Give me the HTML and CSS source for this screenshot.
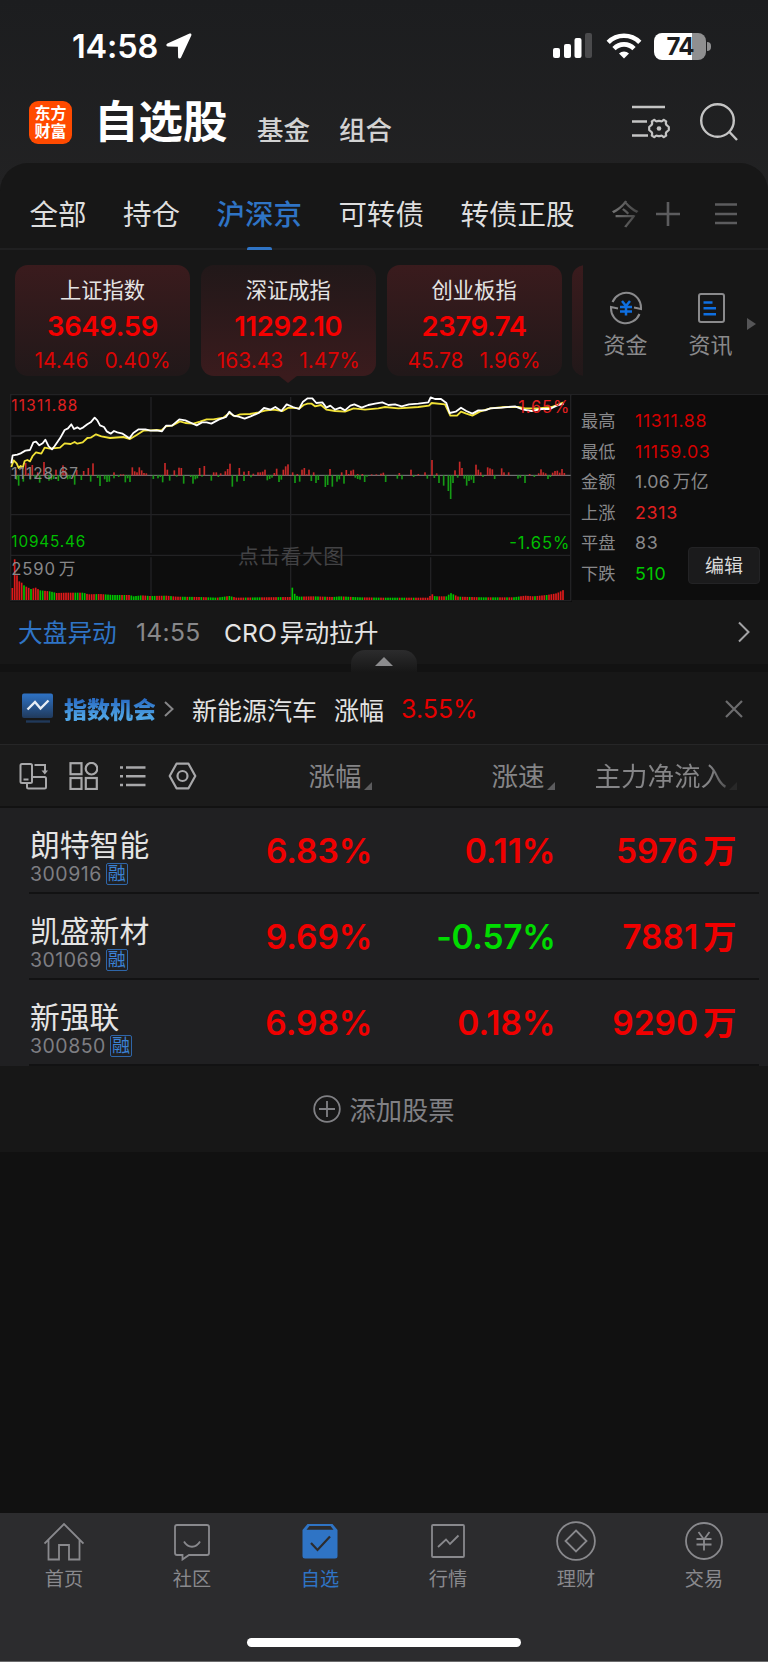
FILE: index.html
```html
<!DOCTYPE html>
<html lang="zh-CN">
<head>
  <meta charset="UTF-8" />
  <meta name="viewport" content="width=device-width, initial-scale=1" />
  <title>自选股</title>
  <link rel="stylesheet" href="styles.css">
</head>
<body>
  <div class="app">
    <div class="status-bar">
      <span class="time">14:58</span>
      <svg class="location" width="26" height="26" viewBox="0 0 26 26"><path d="M23.600.6 1.400 10.400c-1.600.8-1.300 2.900.5 3l10 .3.200 10.200c.1 1.800 2.400 2.200 3.100.4L25.300 2.400c.5-1.300-.4-2.300-1.700-1.800z" fill="#fff"/></svg>
      <svg class="signal" width="40" height="26" viewBox="0 0 40 26">
        <rect x="0" y="15" width="7" height="10" rx="2" fill="#fff"/>
        <rect x="11" y="11" width="7" height="14" rx="2" fill="#fff"/>
        <rect x="21.500" y="5" width="7" height="20" rx="2" fill="#fff"/>
        <rect x="32" y="0" width="7" height="25" rx="2" fill="#4a4a4c"/>
      </svg>
      <svg class="wifi" width="36" height="26" viewBox="0 0 36 26" fill="none" stroke="#fff" stroke-width="4.600">
        <path d="M2.200 9.300a22.300 22.300 0 0 1 31.600 0"/>
        <path d="M8 15.600a14 14 0 0 1 20 0"/>
        <path d="M18 25.500l-5-5a7.200 7.200 0 0 1 10 0z" fill="#fff" stroke="none"/>
      </svg>
      <div class="battery"><span>74</span></div>
    </div>

    <header class="header">
      <div class="logo"><span>东方</span><span>财富</span></div>
      <h1>自选股</h1>
      <a class="sub">基金</a>
      <a class="sub">组合</a>
      <svg class="manage" width="38" height="34" viewBox="0 0 38 34" fill="none" stroke="#c4c4c4" stroke-width="2.400">
        <path d="M0 2h33M0 16.500h15M0 30.500h16"/>
        <path stroke-width="2.200" stroke-linejoin="round" d="M22.500 14.800q1.500 2 3.200 1.300 1.300-.5 2.600 0 1.700.7 3.200-1.300l2.700 1.600q-1 2.600.7 3.900l1.900 1.700v3l-1.900 1.700q-1.700 1.300-.7 3.900l-2.700 1.600q-1.500-2-3.200-1.300-1.300.5-2.600 0-1.700-.7-3.200 1.300l-2.700-1.600q1-2.600-.7-3.900L17.200 25v-3l1.900-1.700q1.700-1.300.7-3.900z"/>
        <circle cx="27" cy="23.500" r="2.300" fill="#c4c4c4" stroke="none"/>
      </svg>
      <svg class="search" width="38" height="38" viewBox="0 0 38 38" fill="none" stroke="#c4c4c4" stroke-width="2.400">
        <circle cx="17.500" cy="17.500" r="16.300"/><path d="M29 28.500l8 8.500"/>
      </svg>
    </header>

    <main class="panel">
      <nav class="tabs">
        <a>全部</a><a>持仓</a><a class="active">沪深京</a><a>可转债</a><a>转债正股</a><a class="faded">今</a>
        <svg class="add" width="24" height="24" viewBox="0 0 24 24" stroke="#5c5c5e" stroke-width="2.600"><path d="M12 0v24M0 12h24"/></svg>
        <svg class="menu" width="22" height="22" viewBox="0 0 22 22" stroke="#5c5c5e" stroke-width="2.400"><path d="M0 1.500h22M0 11h22M0 20h22"/></svg>
      </nav>

      <section class="indices">
        <div class="cards">
          <div class="card">
            <div class="name">上证指数</div>
            <div class="price">3649.59</div>
            <div class="change"><span>14.46</span><span>0.40%</span></div>
          </div>
          <div class="card selected">
            <div class="name">深证成指</div>
            <div class="price">11292.10</div>
            <div class="change"><span>163.43</span><span>1.47%</span></div>
          </div>
          <div class="card">
            <div class="name">创业板指</div>
            <div class="price">2379.74</div>
            <div class="change"><span>45.78</span><span>1.96%</span></div>
          </div>
          <div class="card"></div>
        </div>
        <div class="shortcut">
          <svg width="34" height="34" viewBox="0 0 34 34" fill="none" stroke="#8a8a8c" stroke-width="2">
            <path d="M3.500 11A14.800 14.800 0 0 1 32 17v1l-7-1.500M30.500 23A14.800 14.800 0 0 1 2 17v-1l7 1.500"/>
            <path stroke="#0f6fe0" stroke-width="2.500" d="M13 10l4 5 4-5M11 16h12M11 20.500h12M17 15v9.500"/>
          </svg>
          <span>资金</span>
        </div>
        <div class="shortcut">
          <svg width="34" height="34" viewBox="0 0 34 34" fill="none" stroke="#8a8a8c" stroke-width="2">
            <rect x="5" y="3" width="25" height="28" rx="2"/>
            <path stroke="#0f6fe0" stroke-width="2.600" d="M9.500 11.500h9M9.500 17.300h12.500M9.500 23.200h12.500"/>
          </svg>
          <span>资讯</span>
        </div>
        <i class="more"></i>
      </section>

      <section class="market">
        <!-- viewBox is three units per pixel -->
        <svg class="chart" width="562" height="208" viewBox="30 27 1686 624">
          <g stroke="#222224" stroke-width="4" fill="none">
            <path d="M32 27V648M1712 27V648M30 29H1716M30 153H1712M30 389H1712M30 511H1712M30 647H1712"/>
            <path d="M453 36V505M453 517V645M872 36V505M872 517V645M1292 36V505M1292 517V645"/>
          </g>
          <text class="hint" x="714" y="536" textLength="318">点击看大图</text>
          <path d="M34 271H1712" stroke="#858587" stroke-width="3"/>
          <g id="momentum"></g>
          <g id="volume"></g>
          <g fill="none" stroke-width="5.500" stroke-linejoin="round">
            <polyline stroke="#f0e136" points="34,246 41,226 50,235 56,249 62,243 68,249 74,228 82,225 90,229 98,213 108,202 124,206 134,188 150,191 180,188 194,175 212,177 224,171 232,176 248,172 262,159 272,158 288,148 304,154 330,159 370,156 390,162 410,150 430,137 452,136 470,135 484,136 498,124 516,122 540,109 556,114 580,116 600,110 620,103 640,103 670,98 688,84 705,94 720,88 750,87 776,82 795,77 820,74 848,78 865,68 899,70 911,60 923,56 935,56 945,64 963,60 979,74 1005,78 1035,80 1061,70 1095,74 1135,70 1155,66 1195,70 1255,66 1287,62 1295,54 1335,58 1351,92 1371,92 1383,80 1399,86 1417,92 1439,80 1471,70 1515,66 1555,66 1575,70 1615,70 1655,66 1691,52"/>
            <polyline stroke="#fff" points="34,235 38,211 52,209 62,205 76,197 90,195 100,172 108,170 118,181 128,175 136,164 146,184 156,193 164,183 180,160 194,135 204,130 214,118 222,132 232,127 240,132 250,127 262,118 272,112 284,98 292,106 300,121 312,126 320,139 332,146 342,138 352,142 368,146 388,160 400,144 416,133 436,133 452,137 470,136 486,139 498,122 516,122 538,103 556,106 574,114 590,121 606,112 620,112 634,116 656,104 678,96 688,80 700,92 716,95 734,101 752,94 776,84 792,69 812,74 826,66 844,78 860,58 879,66 897,72 909,50 923,40 937,40 949,54 967,52 979,68 991,62 1005,74 1021,68 1035,76 1051,62 1063,58 1085,68 1105,60 1125,56 1147,52 1165,60 1185,58 1205,64 1227,58 1255,56 1285,52 1292,37 1305,42 1323,42 1339,54 1349,84 1367,80 1383,68 1399,78 1417,86 1435,76 1455,76 1471,70 1505,68 1545,64 1570,74 1595,78 1625,72 1650,72 1670,62 1691,56"/>
          </g>
          <text class="up" x="34" y="78" textLength="198">11311.88</text>
          <text class="flat" x="34" y="282" textLength="200">11128.67</text>
          <text class="down" x="34" y="487" textLength="222">10945.46</text>
          <text class="up pct" x="1555" y="84" textLength="153">1.65%</text>
          <text class="down pct" x="1528" y="492" textLength="180">-1.65%</text>
          <text class="flat vol" x="34" y="569" textLength="192">2590 万</text>
        </svg>
        <div class="stats">
          <dl>
            <dt>最高</dt><dd class="red">11311.88</dd>
            <dt>最低</dt><dd class="red">11159.03</dd>
            <dt>金额</dt><dd class="amount">1.06 万亿</dd>
            <dt>上涨</dt><dd class="lightred">2313</dd>
            <dt>平盘</dt><dd>83</dd>
            <dt>下跌</dt><dd class="green">510</dd>
          </dl>
          <button class="edit">编辑</button>
        </div>
      </section>

      <section class="news">
        <span class="label">大盘异动</span>
        <span class="at">14:55</span>
        <span class="text">CRO 异动拉升</span>
        <svg width="12" height="22" viewBox="0 0 12 22" fill="none" stroke="#a2a2a4" stroke-width="2"><path d="M1 1.500l9.500 9.500L1 20.500"/></svg>
        <div class="handle"></div>
      </section>

      <section class="chance">
        <svg class="chance-icon" width="32" height="32" viewBox="0 0 32 32">
          <defs><linearGradient id="blue" x1="0" y1="0" x2="0" y2="1"><stop offset="0" stop-color="#2e73c6"/><stop offset="1" stop-color="#213a5c"/></linearGradient></defs>
          <rect x="0" y="0.500" width="31" height="24.500" rx="2" fill="url(#blue)"/>
          <path d="M4 28.500h24" stroke="#20395a" stroke-width="2.400"/>
          <path d="M5.500 16.500l7.500-7.500 5.500 6.500 8-8" fill="none" stroke="#e8eef6" stroke-width="2.400"/>
        </svg>
        <b>指数机会</b>
        <svg class="arrow" width="10" height="16" viewBox="0 0 10 16" fill="none" stroke="#858587" stroke-width="2"><path d="M1 1l7.500 7L1 15"/></svg>
        <span class="sector">新能源汽车</span>
        <span class="rise">涨幅</span>
        <span class="percent">3.55%</span>
        <svg class="close" width="18" height="18" viewBox="0 0 18 18" stroke="#6c6c6e" stroke-width="2.200"><path d="M1 1l16 16M17 1L1 17"/></svg>
      </section>

      <section class="columns">
        <svg width="29" height="28" viewBox="0 0 29 28" fill="none" stroke="#a8a8aa" stroke-width="2">
          <rect x="1.500" y="2" width="11.500" height="19" rx="1.500"/><path d="M4.500 17.500h5"/>
          <path d="M15.500 3h10.500v8M13 15h12.500q1.500 0 1.500 1.500v8.500q0 1.500-1.500 1.500H9.500q-1.500 0-1.500-1.500v-4"/>
          <path d="M22.500 8.500h6.500l-3.200 4z" fill="#a8a8aa" stroke="none"/>
        </svg>
        <svg width="29" height="28" viewBox="0 0 29 28" fill="none" stroke="#a8a8aa" stroke-width="2.200">
          <rect x="1.500" y="1.200" width="11" height="11"/><circle cx="22.500" cy="6.700" r="5.800"/>
          <rect x="1.500" y="16" width="11" height="11"/><rect x="16.800" y="16" width="11" height="11"/>
        </svg>
        <svg width="29" height="28" viewBox="0 0 29 28" stroke="#a8a8aa" stroke-width="2.600">
          <path d="M8 5.500h19.500M8 14.200h19.500M8 23h19.500M2 5.500h3M2 14.200h3M2 23h3"/>
        </svg>
        <svg width="29" height="28" viewBox="0 0 29 28" fill="none" stroke="#a8a8aa" stroke-width="2.200" stroke-linejoin="round">
          <path d="M8.500 1.700h12l6.800 12.300-6.800 12.300h-12L1.700 14z"/><circle cx="14.500" cy="14" r="5"/>
        </svg>
        <span class="col1">涨幅<i></i></span>
        <span class="col2">涨速<i></i></span>
        <span class="col3">主力净流入<i></i></span>
      </section>

      <section class="stocks">
        <div class="stock">
          <div class="title"><p>朗特智能</p><small>300916<em>融</em></small></div>
          <span>6.83%</span><span>0.11%</span><span>5976 万</span>
        </div>
        <div class="stock">
          <div class="title"><p>凯盛新材</p><small>301069<em>融</em></small></div>
          <span>9.69%</span><span class="fall">-0.57%</span><span>7881 万</span>
        </div>
        <div class="stock">
          <div class="title"><p>新强联</p><small>300850<em>融</em></small></div>
          <span>6.98%</span><span>0.18%</span><span>9290 万</span>
        </div>
      </section>

      <div class="add-stock">
        <svg width="28" height="28" viewBox="0 0 28 28" fill="none" stroke="#808084" stroke-width="1.800"><circle cx="14" cy="14" r="12.800"/><path d="M14 6v16M6 14h16"/></svg>
        <span>添加股票</span>
      </div>
    </main>

    <footer class="tab-bar">
      <a>
        <svg width="40" height="40" viewBox="0 0 40 40"><path d="M.5 22.500 20 3l19.500 19.500M4.500 19v19.500H15V24h10v14.500h10.500V19"/></svg>
        首页
      </a>
      <a>
        <svg width="40" height="40" viewBox="0 0 40 40"><path d="M5 4h30q2 0 2 2v26q0 2-2 2H17l-6.500 4.500V34H5q-2 0-2-2V6q0-2 2-2zM12 20.500c4 7 12 7 16 0"/></svg>
        社区
      </a>
      <a class="active">
        <svg width="40" height="40" viewBox="0 0 40 40"><path fill="#2f74c5" stroke="none" d="M7.500 3h25l5 6v26q0 2.500-2.500 2.500H5Q2.500 37.500 2.500 35V9z"/><path d="M9.500 5h21l3 3.700h-27z" fill="#2c2c2e" stroke="none"/><path stroke="#2c2c2e" stroke-width="2.200" d="M11 22l6.500 7L30 15.500"/></svg>
        自选
      </a>
      <a>
        <svg width="40" height="40" viewBox="0 0 40 40"><rect x="4" y="4" width="32" height="32" rx="1"/><path d="M10 26l8-7.500 4 4.500 8.500-8.500"/></svg>
        行情
      </a>
      <a>
        <svg width="40" height="40" viewBox="0 0 40 40"><circle cx="20" cy="20" r="18.900"/><path d="M20 9.500l10.500 10.500L20 30.500 9.500 20z"/></svg>
        理财
      </a>
      <a>
        <svg width="40" height="40" viewBox="0 0 40 40"><circle cx="20" cy="20" r="18"/><path d="M14.500 11l5.500 7.500 5.500-7.500M12.500 18h15M12.500 23.500h15M20 18v11.500"/></svg>
        交易
      </a>
      <div class="home-indicator"></div>
    </footer>
  </div>

  <script>
    // x, height above (+) or below (-) the previous close line
    const momentum = [
      [48,15],[77,37],[85,6],[97,31],[113,9],[132,40],[168,17],[189,30],[196,15],[230,16],[251,13],[265,22],[279,36],[342,9],[362,3],[370,3],[397,24],[404,12],[411,9],[418,24],[425,15],[432,7],[439,6],
      [495,37],[502,17],[523,15],[537,23],[544,22],[599,22],[613,28],[641,9],[649,9],[662,6],[676,12],[683,19],[690,35],[718,22],[732,11],[746,13],[760,5],[774,9],[781,9],[788,11],[795,17],[823,7],[830,20],[850,17],[857,27],[864,33],
      [878,9],[892,4],[906,17],[913,22],[920,3],[927,17],[941,9],[990,19],[1025,9],[1039,16],[1046,4],[1053,14],[1060,17],[1073,4],[1087,4],[1115,3],[1129,3],[1143,5],[1150,8],[1198,7],[1233,17],[1255,4],[1275,9],[1296,46],[1310,6],[1365,15],[1379,41],[1386,22],[1428,32],[1435,17],[1442,9],[1463,24],[1470,21],[1477,18],[1505,21],[1512,9],[1526,9],[1589,4],[1616,6],[1623,18],[1630,9],[1637,6],[1658,8],[1665,13],[1672,14],[1679,8],[1686,19],[1693,7],
      [50,-13],[56,-31],[70,-19],[91,-13],[105,-8],[119,-22],[147,-16],[154,-13],[161,-11],[175,-17],[182,-5],[203,-12],[210,-10],[224,-28],[244,-14],[272,-19],[293,-8],[300,-32],[314,-12],[321,-20],[328,-19],[342,-9],[356,-5],[376,-21],[383,-9],[390,-20],
      [460,-11],[474,-9],[481,-5],[488,-21],[509,-16],[530,-4],[551,-25],[572,-5],[579,-25],[586,-12],[592,-9],[606,-4],[634,-16],[655,-5],[697,-34],[711,-19],[732,-17],[753,-6],[802,-15],[809,-11],[816,-7],[837,-20],[844,-13],
      [885,-23],[899,-19],[934,-17],[948,-23],[955,-14],[976,-35],[983,-29],[997,-34],[1011,-19],[1018,-12],[1032,-25],[1066,-7],[1073,-11],[1080,-13],[1094,-20],[1101,-4],[1157,-20],[1192,-10],[1206,-12],[1241,-5],[1282,-10],[1303,-8],[1317,-23],[1331,-31],[1345,-47],[1352,-71],[1359,-23],[1373,-7],[1393,-10],[1400,-31],[1407,-17],[1414,-13],[1421,-23],[1449,-5],[1484,-11],[1554,-10],[1561,-7],[1575,-23],[1603,-5],[1644,-11],[1651,-5]
    ];

    // turnover heights, filled in linearly between the points
    const turnover = [[37,36],[44,122],[51,74],[58,56],[65,52],[72,44],[79,40],[93,33],[107,37],[120,29],[150,26],[170,21],[200,22],[250,22],[265,17],[300,18],[340,15],[390,15],[400,11],[425,14],[450,12],[500,13],[530,10],[600,9],[650,7],[688,12],[710,7],[780,8],[870,9],[877,37],[885,16],[895,10],[940,11],[1000,9],[1020,11],[1080,8],[1150,7],[1285,7],[1296,18],[1305,11],[1340,11],[1352,21],[1360,17],[1375,10],[1450,8],[1540,8],[1575,13],[1600,11],[1640,15],[1670,20],[1690,30]];
    // alternating run lengths, red first
    const runs = [5,1,2,1,3,2,2,3,8,2,1,2,4,1,3,7,1,1,2,5,2,1,1,2,3,1,2,1,4,2,1,2,3,1,2,4,1,3,1,2,5,1,2,4,7,2,4,5,5,2,2,1,3,4,1,2,1,5,4,3,2,6,1,2,3,1,8,2,3,4,2,1,3,1,3,4,2,3,3,1,2,3,6,1,4,1,99];

    function bar(x, y, h, color) {
      return `<rect x="${x - 2.5}" y="${y}" width="5" height="${h}" fill="${color}"/>`;
    }

    document.getElementById('momentum').innerHTML = momentum.map(([x, h]) =>
      h > 0 ? bar(x, 271 - h, h, '#c62828') : bar(x, 271, -h, '#159a15')).join('');

    let html = '', run = 0, left = runs[0];
    for (let x = 37; x <= 1690; x += 7) {
      let i = turnover.findIndex(p => p[0] >= x);
      if (i < 1) i = 1;
      const [x0, h0] = turnover[i - 1], [x1, h1] = turnover[i];
      const h = h0 + (h1 - h0) * (x - x0) / (x1 - x0);
      html += bar(x, 645 - h, h, run % 2 ? '#00c400' : '#df1a1a');
      if (--left === 0) left = runs[++run];
    }
    document.getElementById('volume').innerHTML = html;
  </script>
</body>
</html>
```
FILE: styles.css
```css
* { box-sizing: border-box; }

body {
  margin: 0;
  background: #111;
  color: #e4e4e4;
  font-family: Inter, "Noto Sans CJK SC", sans-serif;
}

h1, p, dl, dd { margin: 0; }
svg { display: block; flex: none; }
i, em { font-style: normal; }

.app {
  width: 768px;
  height: 1662px;
  display: flex;
  flex-direction: column;
  background: linear-gradient(#1c1d1f, #222223 190px, #111 191px);
  overflow: hidden;
  white-space: nowrap;
}

/* status bar */
.status-bar {
  height: 92px;
  flex: none;
  display: flex;
  align-items: center;
  padding: 0 57px 0 72px;
}

.time { width: 94px; font-size: 32.5px; font-weight: 600; letter-spacing: -0.2px; color: #fff; }
.signal { margin: 0 13px 0 auto; }
.wifi { margin-right: 12px; }

.battery {
  position: relative;
  width: 52px;
  height: 27px;
  margin-right: 5px;
  border-radius: 8px;
  background: linear-gradient(90deg, #fff 38px, #8f8f90 38px);
  color: #1c1d1f;
  font-size: 24px;
  font-weight: 700;
  line-height: 27px;
  text-align: center;
  letter-spacing: -1px;
}

.battery::after {
  content: "";
  position: absolute;
  left: 53px;
  top: 9px;
  width: 4px;
  height: 9px;
  border-radius: 0 5px 5px 0;
  background: #8f8f90;
}

/* header */
.header {
  height: 71px;
  flex: none;
  display: flex;
  align-items: flex-start;
  padding: 9px 30px 0 29px;
}

.logo {
  width: 43px;
  height: 43px;
  border-radius: 9px;
  background: #ff4a00;
  color: #fff;
  font-size: 16px;
  font-weight: 700;
  line-height: 18px;
  padding-top: 3px;
  text-align: center;
}

.logo span { display: block; }

h1 {
  margin-left: 22px;
  width: 163px;
  color: #fff;
  font-size: 44.5px;
  font-weight: 600;
  line-height: 43px;
}

.sub { width: 82px; color: #d2d2d2; font-size: 26.5px; font-weight: 500; line-height: 58px; }
.manage { margin: 4px 30px 0 auto; }
.search { margin-top: 2px; }

.panel {
  flex: none;
  border-radius: 28px 28px 0 0;
  background: #171717;
}

/* tabs */
.tabs {
  height: 87px;
  display: flex;
  align-items: center;
  gap: 36.5px;
  padding: 16px 33px 0 29.5px;
  border-bottom: 2px solid #202021;
  font-size: 28.5px;
  color: #dedede;
}

.tabs a { position: relative; padding-bottom: 2px; }
.tabs .active { color: #2f74c5; font-weight: 500; }

.tabs .active::after {
  content: "";
  position: absolute;
  left: 30px;
  bottom: -15px;
  width: 25px;
  height: 3px;
  border-radius: 2px 2px 0 0;
  background: #2f74c5;
}

.tabs .faded {
  margin-right: -20px;
  background: linear-gradient(90deg, #777, #404040);
  -webkit-background-clip: text;
  color: transparent;
}

.tabs .menu { margin-left: -2px; }

/* index cards */
.indices { height: 144px; display: flex; padding: 15px 0 0 15px; }

.cards {
  width: 568px;
  height: 129px;
  display: flex;
  gap: 10.8px;
  overflow: hidden;
}

.card {
  position: relative;
  flex: none;
  width: 175px;
  height: 111px;
  padding-top: 10px;
  border-radius: 13px;
  background: linear-gradient(#3a1b1d, #211819);
  text-align: center;
}

.card.selected { background: linear-gradient(#211819, #3a1b1d); }

.card.selected::after {
  content: "";
  position: absolute;
  left: 78px;
  top: 111px;
  border: 9.5px solid transparent;
  border-top: 7px solid #3a1b1d;
  border-bottom: 0;
}

.card .name { height: 30px; font-size: 21.3px; line-height: 30px; }
.card .price { height: 41px; color: #f40000; font-size: 27.5px; font-weight: 600; line-height: 42px; letter-spacing: -0.4px; }
.card .change { display: flex; justify-content: center; gap: 16px; color: #dc0404; font-size: 21px; line-height: 29px; }

.shortcut {
  width: 85px;
  padding-top: 26px;
  display: flex;
  flex-direction: column;
  align-items: center;
  color: #8a8a8c;
  font-size: 22px;
  line-height: 40px;
}

.more {
  margin: 53px 0 0 -6px;
  width: 0;
  height: 0;
  border: 6px solid transparent;
  border-left: 9px solid #555557;
  border-right: 0;
}

/* chart */
.market { display: flex; height: 207px; padding-left: 10px; }
.chart { background: #0d0d0d; font-size: 46px; }
.chart .up { fill: #e02020; }
.chart .down { fill: #00bd00; }
.chart .flat { fill: #88888a; }
.chart .pct, .chart .vol { font-size: 50px; }
.chart .vol { word-spacing: -8px; }
.chart .hint { fill: #434345; font-size: 62px; }

.stats {
  position: relative;
  flex: 1;
  height: 206px;
  padding: 10px 0 0 9px;
  border-top: 1px solid #222224;
  background: #0d0d0d;
}

.stats dl {
  display: grid;
  grid-template-columns: 54px 1fr;
  grid-auto-rows: 30.5px;
  font-size: 17.8px;
  line-height: 31px;
  color: #88888a;
}

.stats dt { font-size: 17.2px; }
.stats dd { letter-spacing: 0.7px; }
.stats .amount { letter-spacing: 0.2px; word-spacing: -2.5px; }
.stats .red { color: #d40000; }
.stats .lightred { color: #e02020; }
.stats .green { color: #00c800; }

.edit {
  position: absolute;
  left: 116px;
  top: 152px;
  width: 72px;
  height: 37px;
  padding: 0 0 2px;
  border: 1px solid #232325;
  border-radius: 4px;
  background: #1b1b1c;
  color: #d8d8d8;
  font: inherit;
  font-size: 19px;
}

/* news */
.news {
  position: relative;
  display: flex;
  align-items: center;
  height: 71px;
  padding: 0 18px 2px 18px;
  border-bottom: 8px solid #121212;
  font-size: 24.7px;
}

.news .label { width: 118px; padding-bottom: 2px; color: #2f74c5; }
.news .at { width: 88px; color: #88888a; letter-spacing: 0.3px; }
.news .text { padding-bottom: 2px; word-spacing: -4px; }
.news svg { margin-left: auto; }

.handle {
  position: absolute;
  left: 351px;
  top: 49px;
  width: 66px;
  height: 22px;
  border-radius: 14px 14px 0 0;
  background: linear-gradient(#2c2c2d, #171717);
}

.handle::after {
  content: "";
  position: absolute;
  left: 24px;
  top: 7px;
  border: 9px solid transparent;
  border-bottom: 9px solid #8c8c8e;
  border-top: 0;
}

/* index opportunity */
.chance {
  display: flex;
  align-items: center;
  height: 72px;
  padding: 2px 25px 0 22px;
  font-size: 25px;
}

.chance b {
  margin: 0 9px 2px 10px;
  width: 91px;
  font-size: 23px;
  font-weight: 900;
  background: linear-gradient(#2a6cc4 25%, #4ea3e4 75%);
  -webkit-background-clip: text;
  color: transparent;
}

.chance .sector { margin-left: 18px; width: 142px; padding-bottom: 1px; }
.chance .rise { width: 67px; padding-bottom: 1px; }
.chance .percent { color: #e60000; }
.chance .close { margin-left: auto; }

/* column heads */
.columns {
  display: flex;
  align-items: center;
  gap: 20.5px;
  height: 62px;
  padding-left: 19px;
  border-top: 1px solid #262627;
  background: #1b1b1b;
  color: #858587;
  font-size: 26.5px;
}

.columns span { display: flex; padding-bottom: 2px; }

.columns i {
  align-self: flex-end;
  margin: 0 0 4px 2px;
  border: 4px solid #5c5c5e;
  border-top-color: transparent;
  border-left-color: transparent;
}

.columns .col1 { margin-left: 91.5px; }
.columns .col2 { margin-left: 99.5px; }

.columns .col3 {
  margin-left: 19.5px;
  background: linear-gradient(90deg, #858587 80%, #333 100%);
  -webkit-background-clip: text;
  color: transparent;
}

.columns .col3 i { opacity: 0.2; }

/* stocks */
.stocks { border-top: 2px solid #121212; background: #202022; }

.stock {
  position: relative;
  display: grid;
  grid-template-columns: 201px 140.5px 183px 181px;
  height: 86px;
  padding-left: 30px;
  color: #f00000;
  font-size: 33.5px;
  font-weight: 600;
  line-height: 86px;
  text-align: right;
  word-spacing: -3.5px;
}

.stock::after {
  content: "";
  position: absolute;
  left: 29px;
  right: 9px;
  bottom: 0;
  height: 2px;
  background: #121213;
}

.stock > span { margin-right: -1px; }
.stock .fall { color: #00dc00; letter-spacing: -0.3px; }
.stock .title { padding-top: 19px; text-align: left; font-weight: 400; }
.stock p { height: 36px; color: #e4e4e4; font-size: 29.8px; line-height: 37px; }

.stock small {
  display: flex;
  align-items: center;
  height: 22px;
  color: #7e7e82;
  font-size: 19.5px;
  line-height: 22px;
  letter-spacing: 0.5px;
}

.stock em {
  width: 22px;
  height: 22px;
  margin-left: 4px;
  border: 1px solid #2f66a8;
  border-radius: 2px;
  color: #3b82d4;
  font-size: 18px;
  line-height: 19px;
  letter-spacing: 0;
  text-align: center;
}

.add-stock {
  display: flex;
  align-items: center;
  justify-content: center;
  gap: 8px;
  height: 86px;
  color: #808084;
  font-size: 26.3px;
}

.add-stock span { padding-bottom: 2px; }

/* bottom tab bar */
.tab-bar {
  position: relative;
  height: 149px;
  flex: none;
  margin-top: auto;
  display: grid;
  grid-template-columns: repeat(6, 128px);
  padding-top: 8px;
  border-bottom: 1px solid #6a6a6b;
  background: #2c2c2e;
}

.tab-bar a {
  display: flex;
  flex-direction: column;
  align-items: center;
  color: #89898d;
  font-size: 19.2px;
  line-height: 37px;
}

.tab-bar svg { fill: none; stroke: #89898d; stroke-width: 1.8; }
.tab-bar .active { color: #2f74c5; }

.home-indicator {
  position: absolute;
  left: 247px;
  bottom: 14px;
  width: 274px;
  height: 9px;
  border-radius: 5px;
  background: #fff;
}
```
